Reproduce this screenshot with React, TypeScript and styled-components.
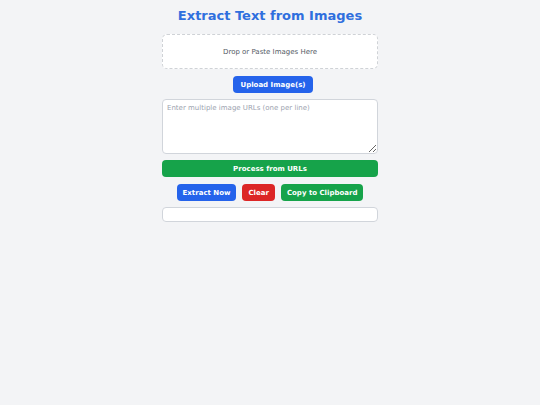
import React from "react";
import styled, { createGlobalStyle } from "styled-components";

const GlobalStyle = createGlobalStyle`
  body {
    margin: 0;
    background: #f3f4f6;
    font-family: "DejaVu Sans", Verdana, sans-serif;
  }
`;

const Page = styled.div`
  width: 216px;
  margin: 0 auto;
  padding-top: 8px;
  display: flex;
  flex-direction: column;
  align-items: center;
`;

const Title = styled.h1`
  margin: 0 0 10px;
  font-size: 13px;
  font-weight: 700;
  color: #2f6fde;
  line-height: 16px;
`;

const DropZone = styled.div`
  box-sizing: border-box;
  width: 100%;
  height: 35px;
  border: 1px dashed #cfd2d6;
  border-radius: 5px;
  background: #fff;
  display: flex;
  align-items: center;
  justify-content: center;
  font-size: 7px;
  color: #555b66;
`;

const Button = styled.button<{ tone: "blue" | "green" | "red"; full?: boolean }>`
  box-sizing: border-box;
  height: 17px;
  padding: 0 6px;
  border: 0;
  border-radius: 4px;
  font-family: inherit;
  font-size: 7px;
  font-weight: 700;
  color: #fff;
  cursor: pointer;
  width: ${(p) => (p.full ? "100%" : "auto")};
  background: ${(p) =>
    p.tone === "blue" ? "#2563eb" : p.tone === "green" ? "#16a34a" : "#dc2626"};
`;

const UploadButton = styled(Button)`
  margin-top: 7px;
  margin-left: 6px;
  padding: 0 7px;
`;

const UrlArea = styled.textarea`
  box-sizing: border-box;
  width: 100%;
  height: 55px;
  margin-top: 6px;
  padding: 4px;
  border: 1px solid #d1d5db;
  border-radius: 4px;
  font-family: inherit;
  font-size: 7px;
  resize: vertical;
  &::placeholder {
    color: #9ca3af;
  }
`;

const ProcessButton = styled(Button)`
  margin-top: 6px;
`;

const Actions = styled.div`
  display: flex;
  gap: 6px;
  margin-top: 7px;
`;

const Output = styled.div`
  box-sizing: border-box;
  width: 100%;
  height: 15px;
  margin-top: 6px;
  border: 1px solid #d1d5db;
  border-radius: 4px;
  background: #fff;
`;

export default function App() {
  return (
    <>
      <GlobalStyle />
      <Page>
        <Title>Extract Text from Images</Title>
        <DropZone>Drop or Paste Images Here</DropZone>
        <UploadButton tone="blue">Upload Image(s)</UploadButton>
        <UrlArea placeholder="Enter multiple image URLs (one per line)" />
        <ProcessButton tone="green" full>
          Process from URLs
        </ProcessButton>
        <Actions>
          <Button tone="blue">Extract Now</Button>
          <Button tone="red">Clear</Button>
          <Button tone="green">Copy to Clipboard</Button>
        </Actions>
        <Output />
      </Page>
    </>
  );
}
